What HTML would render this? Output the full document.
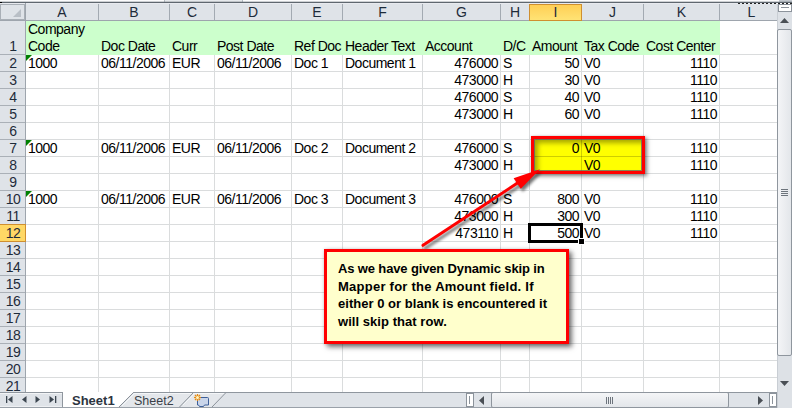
<!DOCTYPE html><html><head><meta charset="utf-8"><style>
*{margin:0;padding:0;box-sizing:border-box}
html,body{width:792px;height:408px;overflow:hidden;background:#fff}
body{position:relative;font-family:"Liberation Sans",sans-serif;font-size:13px;color:#000}
.a{position:absolute}
.t{position:absolute;white-space:nowrap;line-height:17px;height:17px;font-size:14px;letter-spacing:-0.5px}
.r{text-align:right}
.gv{position:absolute;width:1px;background:#dadcdd}
.gh{position:absolute;height:1px;background:#dadcdd}
.ch{position:absolute;top:4px;height:17px;line-height:17px;text-align:center;color:#1e2b3a;font-size:14px}
.rh{position:absolute;left:0;width:26px;text-align:center;color:#1e2b3a;line-height:17px;height:17px;font-size:14px;letter-spacing:-0.5px}
</style></head><body>
<div class="a" style="left:0;top:0;width:792px;height:2px;background:#fbfbfc"></div>
<div class="a" style="left:164px;top:0;width:79px;height:2px;background:#e6e9ec;border-left:1px solid #b5bbc2;border-right:1px solid #b5bbc2"></div>
<div class="a" style="left:779px;top:0;width:13px;height:2px;background:#c4c9cf"></div>
<div class="a" style="left:0;top:1px;width:792px;height:1px;background:rgba(120,128,136,.35)"></div>
<div class="a" style="left:0;top:2px;width:792px;height:1px;background:#5f676f"></div>
<div class="a" style="left:0;top:2px;width:2px;height:1px;background:#000"></div>
<div class="a" style="left:0;top:3px;width:777px;height:1px;background:#e8eaef"></div>
<div class="a" style="left:738px;top:3px;width:54px;height:1px;background:repeating-linear-gradient(90deg,#222 0 2px,transparent 2px 4px)"></div>
<div class="a" style="left:0;top:4px;width:777px;height:16px;background:#dfe3e8"></div>
<div class="a" style="left:0;top:20px;width:777px;height:1px;background:#9ea5ad"></div>
<div class="a" style="left:0;top:21px;width:25px;height:371px;background:#dfe3e8"></div>
<div class="a" style="left:25px;top:3px;width:1px;height:389px;background:#9ea5ad"></div>
<svg class="a" style="left:0;top:3px" width="25" height="17"><rect x="0.5" y="1.5" width="24" height="15" fill="none" stroke="#a9afb6"/><polygon points="21,6 21,14 13,14" fill="#b9bfc6"/></svg>
<div class="a" style="left:98px;top:4px;width:1px;height:16px;background:#a3aab2"></div>
<div class="ch" style="left:26px;width:72px">A</div>
<div class="a" style="left:169px;top:4px;width:1px;height:16px;background:#a3aab2"></div>
<div class="ch" style="left:99px;width:70px">B</div>
<div class="a" style="left:214px;top:4px;width:1px;height:16px;background:#a3aab2"></div>
<div class="ch" style="left:170px;width:44px">C</div>
<div class="a" style="left:291px;top:4px;width:1px;height:16px;background:#a3aab2"></div>
<div class="ch" style="left:215px;width:76px">D</div>
<div class="a" style="left:342px;top:4px;width:1px;height:16px;background:#a3aab2"></div>
<div class="ch" style="left:292px;width:50px">E</div>
<div class="a" style="left:422px;top:4px;width:1px;height:16px;background:#a3aab2"></div>
<div class="ch" style="left:343px;width:79px">F</div>
<div class="a" style="left:500px;top:4px;width:1px;height:16px;background:#a3aab2"></div>
<div class="ch" style="left:423px;width:77px">G</div>
<div class="a" style="left:529px;top:4px;width:1px;height:16px;background:#a3aab2"></div>
<div class="ch" style="left:501px;width:28px">H</div>
<div class="a" style="left:529px;top:4px;width:53px;height:17px;background:linear-gradient(#ffcf55,#ffe375);border:1px solid #cf8f30"></div>
<div class="ch" style="left:530px;width:51px">I</div>
<div class="a" style="left:643px;top:4px;width:1px;height:16px;background:#a3aab2"></div>
<div class="ch" style="left:582px;width:61px">J</div>
<div class="a" style="left:719px;top:4px;width:1px;height:16px;background:#a3aab2"></div>
<div class="ch" style="left:644px;width:75px">K</div>
<div class="ch" style="left:720px;width:63px">L</div>
<div class="gv" style="left:98px;top:21px;height:371px"></div>
<div class="gv" style="left:169px;top:21px;height:371px"></div>
<div class="gv" style="left:214px;top:21px;height:371px"></div>
<div class="gv" style="left:291px;top:21px;height:371px"></div>
<div class="gv" style="left:342px;top:21px;height:371px"></div>
<div class="gv" style="left:422px;top:21px;height:371px"></div>
<div class="gv" style="left:500px;top:21px;height:371px"></div>
<div class="gv" style="left:529px;top:21px;height:371px"></div>
<div class="gv" style="left:581px;top:21px;height:371px"></div>
<div class="gv" style="left:643px;top:21px;height:371px"></div>
<div class="gv" style="left:719px;top:21px;height:371px"></div>
<div class="gh" style="left:26px;top:54px;width:751px"></div>
<div class="gh" style="left:26px;top:71px;width:751px"></div>
<div class="gh" style="left:26px;top:88px;width:751px"></div>
<div class="gh" style="left:26px;top:105px;width:751px"></div>
<div class="gh" style="left:26px;top:122px;width:751px"></div>
<div class="gh" style="left:26px;top:139px;width:751px"></div>
<div class="gh" style="left:26px;top:156px;width:751px"></div>
<div class="gh" style="left:26px;top:173px;width:751px"></div>
<div class="gh" style="left:26px;top:190px;width:751px"></div>
<div class="gh" style="left:26px;top:207px;width:751px"></div>
<div class="gh" style="left:26px;top:224px;width:751px"></div>
<div class="gh" style="left:26px;top:241px;width:751px"></div>
<div class="gh" style="left:26px;top:258px;width:751px"></div>
<div class="gh" style="left:26px;top:275px;width:751px"></div>
<div class="gh" style="left:26px;top:292px;width:751px"></div>
<div class="gh" style="left:26px;top:309px;width:751px"></div>
<div class="gh" style="left:26px;top:326px;width:751px"></div>
<div class="gh" style="left:26px;top:343px;width:751px"></div>
<div class="gh" style="left:26px;top:360px;width:751px"></div>
<div class="gh" style="left:26px;top:377px;width:751px"></div>
<div class="a" style="left:0;top:54px;width:25px;height:1px;background:#aab0b7"></div>
<div class="rh" style="top:38px">1</div>
<div class="a" style="left:0;top:71px;width:25px;height:1px;background:#aab0b7"></div>
<div class="rh" style="top:55px">2</div>
<div class="a" style="left:0;top:88px;width:25px;height:1px;background:#aab0b7"></div>
<div class="rh" style="top:72px">3</div>
<div class="a" style="left:0;top:105px;width:25px;height:1px;background:#aab0b7"></div>
<div class="rh" style="top:89px">4</div>
<div class="a" style="left:0;top:122px;width:25px;height:1px;background:#aab0b7"></div>
<div class="rh" style="top:106px">5</div>
<div class="a" style="left:0;top:139px;width:25px;height:1px;background:#aab0b7"></div>
<div class="rh" style="top:123px">6</div>
<div class="a" style="left:0;top:156px;width:25px;height:1px;background:#aab0b7"></div>
<div class="rh" style="top:140px">7</div>
<div class="a" style="left:0;top:173px;width:25px;height:1px;background:#aab0b7"></div>
<div class="rh" style="top:157px">8</div>
<div class="a" style="left:0;top:190px;width:25px;height:1px;background:#aab0b7"></div>
<div class="rh" style="top:174px">9</div>
<div class="a" style="left:0;top:207px;width:25px;height:1px;background:#aab0b7"></div>
<div class="rh" style="top:191px">10</div>
<div class="a" style="left:0;top:224px;width:25px;height:1px;background:#aab0b7"></div>
<div class="rh" style="top:208px">11</div>
<div class="a" style="left:-1px;top:224px;width:27px;height:18px;background:#ffd865;border:1px solid #cf8f30"></div>
<div class="rh" style="top:225px">12</div>
<div class="a" style="left:0;top:258px;width:25px;height:1px;background:#aab0b7"></div>
<div class="rh" style="top:242px">13</div>
<div class="a" style="left:0;top:275px;width:25px;height:1px;background:#aab0b7"></div>
<div class="rh" style="top:259px">14</div>
<div class="a" style="left:0;top:292px;width:25px;height:1px;background:#aab0b7"></div>
<div class="rh" style="top:276px">15</div>
<div class="a" style="left:0;top:309px;width:25px;height:1px;background:#aab0b7"></div>
<div class="rh" style="top:293px">16</div>
<div class="a" style="left:0;top:326px;width:25px;height:1px;background:#aab0b7"></div>
<div class="rh" style="top:310px">17</div>
<div class="a" style="left:0;top:343px;width:25px;height:1px;background:#aab0b7"></div>
<div class="rh" style="top:327px">18</div>
<div class="a" style="left:0;top:360px;width:25px;height:1px;background:#aab0b7"></div>
<div class="rh" style="top:344px">19</div>
<div class="a" style="left:0;top:377px;width:25px;height:1px;background:#aab0b7"></div>
<div class="rh" style="top:361px">20</div>
<div class="rh" style="top:378px">21</div>
<div class="a" style="left:26px;top:21px;width:694px;height:34px;background:#ccffcc"></div>
<div class="a" style="left:531px;top:139px;width:112px;height:35px;background:#ffff00"></div>
<div class="t" style="left:28px;top:21px">Company</div>
<div class="t" style="left:28px;top:38px">Code</div>
<div class="t" style="left:101px;top:38px">Doc Date</div>
<div class="t" style="left:172px;top:38px">Curr</div>
<div class="t" style="left:217px;top:38px">Post Date</div>
<div class="t" style="left:294px;top:38px">Ref Doc</div>
<div class="t" style="left:345px;top:38px">Header Text</div>
<div class="t" style="left:425px;top:38px">Account</div>
<div class="t" style="left:503px;top:38px">D/C</div>
<div class="t" style="left:532px;top:38px">Amount</div>
<div class="t" style="left:584px;top:38px">Tax Code</div>
<div class="t" style="left:646px;top:38px">Cost Center</div>
<div class="t r" style="right:294px;top:55px">476000</div>
<div class="t" style="left:503px;top:55px">S</div>
<div class="t r" style="right:213px;top:55px">50</div>
<div class="t" style="left:584px;top:55px">V0</div>
<div class="t r" style="right:75px;top:55px">1110</div>
<div class="t r" style="right:294px;top:72px">473000</div>
<div class="t" style="left:503px;top:72px">H</div>
<div class="t r" style="right:213px;top:72px">30</div>
<div class="t" style="left:584px;top:72px">V0</div>
<div class="t r" style="right:75px;top:72px">1110</div>
<div class="t r" style="right:294px;top:89px">476000</div>
<div class="t" style="left:503px;top:89px">S</div>
<div class="t r" style="right:213px;top:89px">40</div>
<div class="t" style="left:584px;top:89px">V0</div>
<div class="t r" style="right:75px;top:89px">1110</div>
<div class="t r" style="right:294px;top:106px">473000</div>
<div class="t" style="left:503px;top:106px">H</div>
<div class="t r" style="right:213px;top:106px">60</div>
<div class="t" style="left:584px;top:106px">V0</div>
<div class="t r" style="right:75px;top:106px">1110</div>
<div class="t r" style="right:294px;top:140px">476000</div>
<div class="t" style="left:503px;top:140px">S</div>
<div class="t r" style="right:213px;top:140px">0</div>
<div class="t" style="left:584px;top:140px">V0</div>
<div class="t r" style="right:75px;top:140px">1110</div>
<div class="t r" style="right:294px;top:157px">473000</div>
<div class="t" style="left:503px;top:157px">H</div>
<div class="t" style="left:584px;top:157px">V0</div>
<div class="t r" style="right:75px;top:157px">1110</div>
<div class="t r" style="right:294px;top:191px">476000</div>
<div class="t" style="left:503px;top:191px">S</div>
<div class="t r" style="right:213px;top:191px">800</div>
<div class="t" style="left:584px;top:191px">V0</div>
<div class="t r" style="right:75px;top:191px">1110</div>
<div class="t r" style="right:294px;top:208px">473000</div>
<div class="t" style="left:503px;top:208px">H</div>
<div class="t r" style="right:213px;top:208px">300</div>
<div class="t" style="left:584px;top:208px">V0</div>
<div class="t r" style="right:75px;top:208px">1110</div>
<div class="t r" style="right:294px;top:225px">473110</div>
<div class="t" style="left:503px;top:225px">H</div>
<div class="t r" style="right:213px;top:225px">500</div>
<div class="t" style="left:584px;top:225px">V0</div>
<div class="t r" style="right:75px;top:225px">1110</div>
<div class="t" style="left:28px;top:55px">1000</div>
<div class="t" style="left:101px;top:55px">06/11/2006</div>
<div class="t" style="left:172px;top:55px">EUR</div>
<div class="t" style="left:217px;top:55px">06/11/2006</div>
<div class="t" style="left:294px;top:55px">Doc 1</div>
<div class="t" style="left:345px;top:55px">Document 1</div>
<div class="a" style="left:26px;top:55px;width:0;height:0;border-top:6px solid #008000;border-right:6px solid transparent"></div>
<div class="t" style="left:28px;top:140px">1000</div>
<div class="t" style="left:101px;top:140px">06/11/2006</div>
<div class="t" style="left:172px;top:140px">EUR</div>
<div class="t" style="left:217px;top:140px">06/11/2006</div>
<div class="t" style="left:294px;top:140px">Doc 2</div>
<div class="t" style="left:345px;top:140px">Document 2</div>
<div class="a" style="left:26px;top:140px;width:0;height:0;border-top:6px solid #008000;border-right:6px solid transparent"></div>
<div class="t" style="left:28px;top:191px">1000</div>
<div class="t" style="left:101px;top:191px">06/11/2006</div>
<div class="t" style="left:172px;top:191px">EUR</div>
<div class="t" style="left:217px;top:191px">06/11/2006</div>
<div class="t" style="left:294px;top:191px">Doc 3</div>
<div class="t" style="left:345px;top:191px">Document 3</div>
<div class="a" style="left:26px;top:191px;width:0;height:0;border-top:6px solid #008000;border-right:6px solid transparent"></div>
<div class="a" style="left:528px;top:223px;width:55px;height:20px;border:3px solid #000"></div>
<div class="a" style="left:578px;top:238px;width:7px;height:7px;background:#fff"></div>
<div class="a" style="left:579px;top:239px;width:5px;height:5px;background:#000"></div>
<div class="a" style="left:530px;top:156px;width:113px;height:1px;background:rgba(60,60,0,.25)"></div>
<div class="a" style="left:581px;top:139px;width:1px;height:34px;background:rgba(60,60,0,.25)"></div>
<div class="a" style="left:531px;top:136px;width:114px;height:38px;border:3px solid #ff0000;box-shadow:2px 2px 4px rgba(0,0,0,.5), 0 0 2px rgba(0,0,0,.15)"></div>
<div class="a" style="left:534px;top:139px;width:108px;height:32px;box-shadow:inset 0 0 0 1px rgba(90,95,110,.75), inset 4px 4px 5px rgba(0,0,0,.35)"></div>
<svg class="a" style="left:0;top:0" width="792" height="408">
<defs><filter id="sh" x="-20%" y="-20%" width="140%" height="140%"><feGaussianBlur stdDeviation="1.6"/></filter></defs>
<g transform="translate(2,3)" opacity="0.55" filter="url(#sh)"><line x1="423" y1="245.3" x2="519" y2="182" stroke="#000" stroke-width="3" stroke-linecap="round"/><polygon points="540,169.3 513.6,178.2 520.8,188.8" fill="#000"/></g>
<line x1="423" y1="245.3" x2="519" y2="182" stroke="#ff0000" stroke-width="3" stroke-linecap="round"/>
<polygon points="540,169.3 513.6,178.2 520.8,188.8" fill="#ff0000"/>
</svg>
<div class="a" style="left:324px;top:249px;width:245px;height:95px;background:#ffffcc;border:3px solid #ff0000;box-shadow:3px 3px 5px rgba(0,0,0,.55), 0 0 3px rgba(0,0,0,.15)"></div>
<div class="t" style="left:338px;top:260px;font-weight:bold;font-size:13px;letter-spacing:-0.14px">As we have given Dynamic skip in</div>
<div class="t" style="left:338px;top:278px;font-weight:bold;font-size:13px;letter-spacing:0.25px">Mapper for the Amount field. If</div>
<div class="t" style="left:338px;top:295px;font-weight:bold;font-size:13px;letter-spacing:0.03px">either 0 or blank is encountered it</div>
<div class="t" style="left:338px;top:313px;font-weight:bold;font-size:13px;letter-spacing:0.05px">will skip that row.</div>
<div class="a" style="left:777px;top:4px;width:15px;height:404px;background:#dde1e6;border-left:1px solid #c9ced4"></div>
<div class="a" style="left:778px;top:4px;width:14px;height:8px;background:#fff;border:1px solid #8c939b"></div>
<div class="a" style="left:781px;top:7px;width:8px;height:1px;background:#8c939b"></div>
<svg class="a" style="left:777px;top:15px" width="15" height="10"><polygon points="3,8 12,8 7.5,3" fill="#4a4f55"/></svg>
<div class="a" style="left:777px;top:29px;width:15px;height:327px;background:linear-gradient(90deg,#f4f5f7,#e3e6ea);border:1px solid #8f969e;border-radius:2px"></div>
<div class="a" style="left:781px;top:189px;width:7px;height:1px;background:#6d747c"></div>
<div class="a" style="left:781px;top:191px;width:7px;height:1px;background:#6d747c"></div>
<div class="a" style="left:781px;top:193px;width:7px;height:1px;background:#6d747c"></div>
<div class="a" style="left:781px;top:195px;width:7px;height:1px;background:#6d747c"></div>
<svg class="a" style="left:777px;top:379px" width="15" height="10"><polygon points="3,2 12,2 7.5,7" fill="#4a4f55"/></svg>
<svg class="a" style="left:0;top:392px" width="777" height="16">
<rect x="0" y="0" width="777" height="16" fill="#dfe3e8"/>
<polygon points="133,0 194,0 180,15 122,15" fill="#e4e7eb"/>
<polygon points="194,1 226,1 212,15 180,15" fill="#e4e7eb"/>
<line x1="133" y1="0.5" x2="777" y2="0.5" stroke="#8f969e"/>
<line x1="0" y1="0.5" x2="63" y2="0.5" stroke="#8f969e"/>
<line x1="134" y1="1.5" x2="225" y2="1.5" stroke="#f4f6f8"/>
<line x1="0" y1="1.5" x2="62" y2="1.5" stroke="#f2f4f6"/>
<line x1="0" y1="14.5" x2="62" y2="14.5" stroke="#eef0f3"/>
<line x1="62.5" y1="0" x2="62.5" y2="15" stroke="#8f969e"/>
<polygon points="63,0 133.5,0 118.5,15 63,15" fill="#ffffff"/>
<line x1="133.5" y1="0.5" x2="119" y2="15" stroke="#8a9199"/>
<line x1="134.5" y1="1.5" x2="122" y2="14" stroke="#f4f6f8"/>
<line x1="193.5" y1="0.5" x2="179.5" y2="15" stroke="#8a9199"/>
<line x1="194.5" y1="1.5" x2="183" y2="13" stroke="#f4f6f8"/>
<line x1="226" y1="0.5" x2="212" y2="15" stroke="#8a9199"/>
<line x1="0" y1="15.5" x2="777" y2="15.5" stroke="#9aa1a9"/>
<rect x="6" y="4" width="1.3" height="7" fill="#3c4650"/><polygon points="12.5,4 12.5,11 8,7.5" fill="#3c4650"/>
<polygon points="26.5,4 26.5,11 22,7.5" fill="#3c4650"/>
<polygon points="35.5,4 35.5,11 40,7.5" fill="#3c4650"/>
<polygon points="49.5,4 49.5,11 54,7.5" fill="#3c4650"/><rect x="55" y="4" width="1.3" height="7" fill="#3c4650"/>
<path d="M197.5,5.5 h10 a1,1 0 0 1 1,1 v6.5 h-4 l-1,1.5 h-4 l-1,-1.5 h-1 z" fill="#c9d5ea" stroke="#3d5f99"/>
<g stroke="#e88a10" stroke-width="1.2"><line x1="194" y1="5.5" x2="201" y2="5.5"/><line x1="197.5" y1="2" x2="197.5" y2="9"/><line x1="195" y1="3" x2="200" y2="8"/><line x1="200" y1="3" x2="195" y2="8"/></g>
<circle cx="197.5" cy="5.5" r="1.5" fill="#fff6c0"/>
</svg>
<div class="a" style="left:72px;top:392px;white-space:nowrap;font-weight:bold;font-size:13px;line-height:17px;color:#2c3440">Sheet1</div>
<div class="a" style="left:134px;top:393px;white-space:nowrap;font-size:12.5px;line-height:17px;color:#3a3f48">Sheet2</div>
<div class="a" style="left:466px;top:393px;width:8px;height:14px;background:#fff;border:1px solid #8c939b"></div>
<div class="a" style="left:469px;top:396px;width:1px;height:8px;background:#8c939b"></div>
<svg class="a" style="left:476px;top:392px" width="12" height="16"><polygon points="8,4 8,13 3,8.5" fill="#4a4f55"/></svg>
<div class="a" style="left:491px;top:392px;width:238px;height:16px;background:linear-gradient(#f4f5f7,#e3e6ea);border:1px solid #8f969e;border-radius:2px"></div>
<div class="a" style="left:606px;top:397px;width:1px;height:7px;background:#6d747c"></div>
<div class="a" style="left:608px;top:397px;width:1px;height:7px;background:#6d747c"></div>
<div class="a" style="left:610px;top:397px;width:1px;height:7px;background:#6d747c"></div>
<div class="a" style="left:612px;top:397px;width:1px;height:7px;background:#6d747c"></div>
<svg class="a" style="left:755px;top:392px" width="12" height="16"><polygon points="3,4 3,13 8,8.5" fill="#4a4f55"/></svg>
<div class="a" style="left:769px;top:393px;width:8px;height:14px;background:#fff;border:1px solid #8c939b"></div>
<div class="a" style="left:772px;top:396px;width:1px;height:8px;background:#8c939b"></div>
</body></html>
